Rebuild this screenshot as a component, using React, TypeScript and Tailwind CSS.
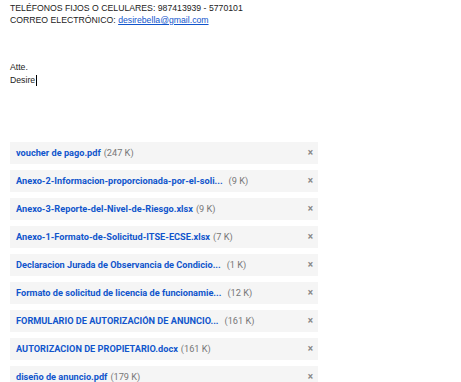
import React from 'react'

const files = [
  { name: 'voucher de pago.pdf', size: '(247 K)', cut: false },
  { name: 'Anexo-2-Informacion-proporcionada-por-el-soli...', size: '(9 K)', cut: true },
  { name: 'Anexo-3-Reporte-del-Nivel-de-Riesgo.xlsx', size: '(9 K)', cut: false },
  { name: 'Anexo-1-Formato-de-Solicitud-ITSE-ECSE.xlsx', size: '(7 K)', cut: false },
  { name: 'Declaracion Jurada de Observancia de Condicio...', size: '(1 K)', cut: true },
  { name: 'Formato de solicitud de licencia de funcionamie...', size: '(12 K)', cut: true },
  { name: 'FORMULARIO DE AUTORIZACIÓN DE ANUNCIO...', size: '(161 K)', cut: true },
  { name: 'AUTORIZACION DE PROPIETARIO.docx', size: '(161 K)', cut: false },
  { name: 'diseño de anuncio.pdf', size: '(179 K)', cut: false },
]

function App() {
  return (
    <div className="h-[382px] w-[461px] overflow-hidden bg-white">
      <div className="pt-[2px] pl-[10px] text-[8.7px] leading-[12px] text-[#222] font-['Liberation_Sans',Arial,sans-serif]">
        <div>TELÉFONOS FIJOS O CELULARES: 987413939 - 5770101</div>
        <div>
          CORREO ELECTRÓNICO: <span className="text-[#1155cc] underline">desirebella@gmail.com</span>
        </div>
        <div className="h-[35px]" />
        <div className="leading-[13px]">Atte.</div>
        <div className="flex items-center leading-[13px]">
          Desire<span className="ml-px inline-block h-[11px] w-px bg-black" />
        </div>
      </div>
      <div className="mt-[55px] flex flex-col gap-[6px] pl-[10px]">
        {files.map((f) => (
          <div
            key={f.name}
            className="flex h-[22px] w-[308px] shrink-0 items-center justify-between bg-[#f5f5f5] pl-[6px] pr-[5px] font-['Roboto',sans-serif] text-[9.2px]"
          >
            <div className="flex items-center whitespace-nowrap">
              <span className="font-bold text-[#1155cc]">{f.name}</span>
              <span className={`text-[#777] ${f.cut ? 'ml-[6px]' : 'ml-[3px]'}`}>{f.size}</span>
            </div>
            <span className="text-[10px] font-bold leading-none text-[#888]">×</span>
          </div>
        ))}
      </div>
    </div>
  )
}

export default App
